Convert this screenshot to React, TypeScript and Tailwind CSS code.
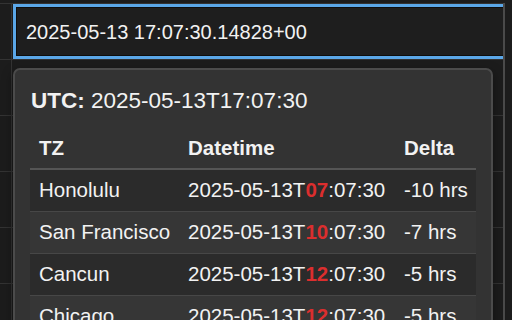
import React from "react";

const rows = [
  { tz: "Honolulu", hh: "07", delta: "-10 hrs" },
  { tz: "San Francisco", hh: "10", delta: "-7 hrs" },
  { tz: "Cancun", hh: "12", delta: "-5 hrs" },
  { tz: "Chicago", hh: "12", delta: "-5 hrs" },
];

export default function App() {
  return (
    <div
      className="relative w-[512px] h-[320px] overflow-hidden bg-[#1c1c1c] text-[#f2f2f2]"
      style={{ fontFamily: '"Liberation Sans", Arial, sans-serif' }}
    >
      {/* background grid */}
      <div className="flex h-full pt-[3px]">
        <div className="w-[12px] border-r border-[#333] flex flex-col">
          {[0, 1, 2, 3, 4, 5].map((i) => (
            <div key={i} className="h-[56px] border-t border-[#333] shrink-0" />
          ))}
        </div>
        <div className="relative w-[493px] flex flex-col border-r-2 border-[#4a4a4a] overflow-hidden">
          {[0, 1, 2, 3, 4, 5].map((i) => (
            <div key={i} className="h-[56px] border-t border-[#333] shrink-0" />
          ))}
          {/* input */}
          <div className="absolute left-px top-px w-[510px] h-[55px] border-[3px] border-[#5ba7e8] bg-[#1e1e1e] shadow-[inset_0_0_0_1px_#0e0e0e] flex items-center pl-[10px] text-[20px]">
            2025-05-13 17:07:30.14828+00
          </div>
        </div>
        <div className="flex-1" />
      </div>

      {/* popover */}
      <div className="absolute left-[13px] top-[68px] w-[480px] h-[300px] rounded-[7px] border-2 border-[#4b4b4b] bg-[#333333] pt-[17px] px-[15px] shadow-[0_4px_12px_rgba(0,0,0,0.4)]">
        <div className="text-[22.5px] leading-[28px] pl-[1px]">
          <span className="font-bold">UTC:</span> 2025-05-13T17:07:30
        </div>
        <div className="mt-[13px] text-[20.5px]">
          <div className="flex h-[42px] items-center border-b-2 border-[#555] font-bold">
            <div className="w-[149px] pl-[9px]">TZ</div>
            <div className="w-[216px] pl-[9px]">Datetime</div>
            <div className="w-[81px] pl-[9px]">Delta</div>
          </div>
          {rows.map((r, i) => (
            <div
              key={r.tz}
              className={`flex h-[42px] items-center border-b border-[#474747] ${
                i % 2 === 0 ? "bg-[#2b2b2b]" : "bg-[#363636]"
              }`}
            >
              <div className="w-[149px] pl-[9px] whitespace-nowrap">{r.tz}</div>
              <div className="w-[216px] pl-[9px] whitespace-nowrap">
                2025-05-13T<span className="font-bold text-[#dc2e2e]">{r.hh}</span>:07:30
              </div>
              <div className="w-[81px] pl-[9px] whitespace-nowrap">{r.delta}</div>
            </div>
          ))}
        </div>
      </div>
    </div>
  );
}
